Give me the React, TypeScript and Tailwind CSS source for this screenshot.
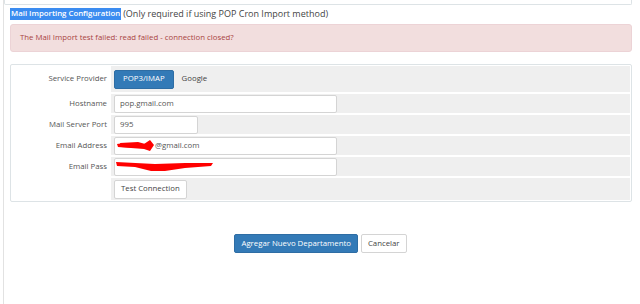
import React from "react"

const font = "font-['Open_Sans','Liberation_Sans',sans-serif]"

function Row({ label, h, children }: { label: string; h: string; children: React.ReactNode }) {
  return (
    <div className={`flex ${h}`}>
      <div className="w-[99px] shrink-0 bg-white flex items-center justify-end pr-[4px] text-[7.8px] text-[#555]">
        {label}
      </div>
      <div className="flex-1 bg-[#efefef] flex items-center pl-[3px]">{children}</div>
    </div>
  )
}

function Input({ w, children }: { w: string; children?: React.ReactNode }) {
  return (
    <div className={`${w} h-[18px] bg-white border border-[#d4d4d4] rounded-[2px] flex items-center pl-[5px] text-[7.8px] text-[#555] relative overflow-hidden`}>
      {children}
    </div>
  )
}

export default function App() {
  return (
    <div className={`w-[640px] h-[304px] bg-white overflow-hidden ${font}`}>
      <div className="ml-[3px] h-full border-l border-[#e2e2e2]">
        <div className="mr-[8px] h-[5px] border border-t-0 border-[#dde3e6] rounded-b-[2px]" />
        <div className="pl-[6px] pr-[8px]">
          <div className="h-[18px] flex items-center text-[#444]">
            <span className="bg-[#3b8cf0] text-white font-semibold px-[1px] text-[7.8px]">Mail Importing Configuration</span>
            <span className="ml-[2px] text-[9px]">(Only required if using POP Cron Import method)</span>
          </div>
          <div className="mt-[1px] h-[28px] bg-[#f2dede] border border-[#ecd3d6] rounded-[3px] flex items-center pl-[9px] text-[7.8px] text-[#a94442]">
            The Mail Import test failed: read failed - connection closed?
          </div>
          <div className="mt-[12px] border border-[#dde3e6] rounded-[2px] p-[1px]">
            <div className="flex flex-col gap-[2px]">
              <Row label="Service Provider" h="h-[26px]">
                <div className="h-[19px] px-[8px] rounded-[2px] bg-[#337ab7] border border-[#2e6da4] text-white text-[7.8px] flex items-center">
                  POP3/IMAP
                </div>
                <span className="ml-[8px] text-[7.8px] text-[#444]">Google</span>
              </Row>
              <Row label="Hostname" h="h-[19px]">
                <Input w="w-[223px]">pop.gmail.com</Input>
              </Row>
              <Row label="Mail Server Port" h="h-[19px]">
                <Input w="w-[84px]">995</Input>
              </Row>
              <Row label="Email Address" h="h-[19px]">
                <Input w="w-[223px]">
                  <svg width="40" height="14" viewBox="0 0 40 14" className="shrink-0 -ml-[4px]">
                    <path d="M1 5 C10 3 20 6 28 5 L34 1 L38 6 L34 12 L28 10 C20 9 10 9 2 8 Z" fill="#ff0000" />
                    <path d="M4 4 L22 3 L33 6 L24 9 L5 8 Z" fill="#ff0000" />
                  </svg>
                  <span className="-ml-[1px]">@gmail.com</span>
                </Input>
              </Row>
              <Row label="Email Pass" h="h-[19px]">
                <Input w="w-[223px]">
                  <svg width="100" height="14" viewBox="0 0 100 14" className="shrink-0 -ml-[5px]">
                    <path d="M1 2 L40 4 L70 3 L98 3 L96 6 L70 8 L50 11 L36 11 L20 7 L2 6 Z" fill="#ff0000" />
                  </svg>
                </Input>
              </Row>
              <Row label="" h="h-[22px]">
                <div className="h-[19px] px-[6px] bg-white border border-[#d4d4d4] rounded-[2px] flex items-center text-[7.8px] text-[#444]">
                  Test Connection
                </div>
              </Row>
            </div>
          </div>
          <div className="mt-[32px] flex justify-center gap-[3px] pr-[1px]">
            <div className="h-[19px] px-[6px] rounded-[2px] bg-[#337ab7] border border-[#2e6da4] text-white text-[7.8px] flex items-center">
              Agregar Nuevo Departamento
            </div>
            <div className="h-[19px] px-[6px] rounded-[2px] bg-white border border-[#d4d4d4] text-[#444] text-[7.8px] flex items-center">
              Cancelar
            </div>
          </div>
        </div>
      </div>
    </div>
  )
}
